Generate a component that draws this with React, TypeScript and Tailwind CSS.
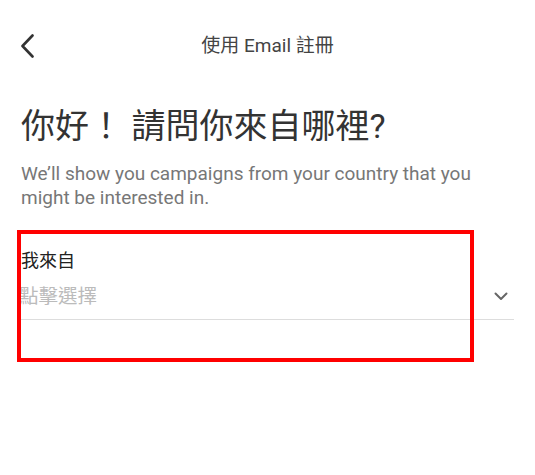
export default function App() {
  return (
    <div
      className="relative w-[535px] h-[475px] bg-white overflow-hidden"
      style={{ fontFamily: "Roboto, 'Noto Sans CJK TC', sans-serif" }}
    >
      {/* header */}
      <div className="grid grid-cols-[1fr_auto_1fr] items-center h-[92px] px-[19px]">
        <button className="w-[24px] h-[24px] flex items-center">
          <svg width="16" height="24" viewBox="0 0 16 24" fill="none">
            <path d="M13.5 1.5 L3.5 12 L13.5 22.5" stroke="#333" strokeWidth="2.6" strokeLinecap="round" strokeLinejoin="round" />
          </svg>
        </button>
        <h1 className="text-[19px] text-[#444]">使用 Email 註冊</h1>
        <div />
      </div>

      <div className="px-[21px]">
        <h2 className="text-[34px] leading-[44px] text-[#333] mt-[12px]">你好！ 請問你來自哪裡?</h2>
        <p className="text-[19px] leading-[24px] text-[#777] mt-[14px] pr-[10px]">
          We’ll show you campaigns from your country that you might be interested in.
        </p>

        <div className="mt-[38px]">
          <div className="text-[18px] leading-[26px] text-[#222]">我來自</div>
          <div className="flex items-center justify-between h-[46px] border-b border-[#ddd]">
            <span className="text-[19.5px] text-[#bbb] -ml-[2px]">點擊選擇</span>
            <svg width="14" height="9" viewBox="0 0 14 9" fill="none" className="mr-[6px]">
              <path d="M1.5 1.5 L7 7 L12.5 1.5" stroke="#666" strokeWidth="2" strokeLinecap="round" strokeLinejoin="round" />
            </svg>
          </div>
        </div>
      </div>

      {/* highlight annotation */}
      <div className="absolute left-[17px] top-[230px] w-[457px] h-[132px] border-4 border-[#f00]" />
    </div>
  );
}
